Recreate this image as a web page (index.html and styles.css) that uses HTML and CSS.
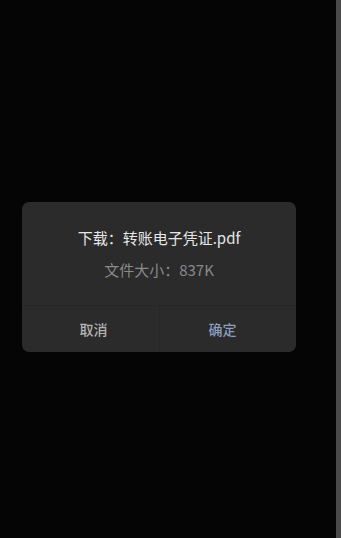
FILE: index.html
```html
<!DOCTYPE html>
<html lang="zh-CN">
<head>
<meta charset="utf-8">
<link rel="stylesheet" href="styles.css">
</head>
<body>
<div class="screen">
  <main class="stage">
    <div class="dialog">
      <div class="body">
        <div class="title">下载：转账电子凭证.pdf</div>
        <div class="size">文件大小：837K</div>
      </div>
      <div class="actions">
        <div class="btn cancel">取消</div>
        <div class="btn ok">确定</div>
      </div>
    </div>
  </main>
  <div class="scrollbar"></div>
</div>
</body>
</html>
```
FILE: styles.css
```css
html, body {
  margin: 0;
  padding: 0;
  height: 100%;
  background: #050505;
  font-family: "Noto Sans CJK SC", "Noto Sans", sans-serif;
}
.screen {
  display: flex;
  height: 538px;
}
.stage {
  flex: 1;
  padding: 202px 0 0 22px;
}
.scrollbar {
  width: 5px;
  background: #4a4a4a;
}
.dialog {
  width: 274px;
  background: #2b2b2b;
  border-radius: 7px;
  overflow: hidden;
}
.body {
  padding: 25px 0 24px;
  text-align: center;
}
.title {
  font-size: 15px;
  line-height: 22px;
  color: #e6e6e6;
  font-weight: 400;
}
.size {
  margin-top: 10px;
  font-size: 15px;
  line-height: 22px;
  color: #8a8a8a;
}
.actions {
  display: grid;
  grid-template-columns: 138px 1fr;
  border-top: 1px solid #272727;
  height: 46px;
}
.btn {
  display: flex;
  align-items: center;
  justify-content: center;
  font-size: 14px;
  font-weight: 500;
}
.cancel {
  color: #b4b4b4;
  border-right: 1px solid #272727;
  padding-left: 6px;
}
.ok {
  color: #8d9dbd;
  padding-right: 11px;
}
```
